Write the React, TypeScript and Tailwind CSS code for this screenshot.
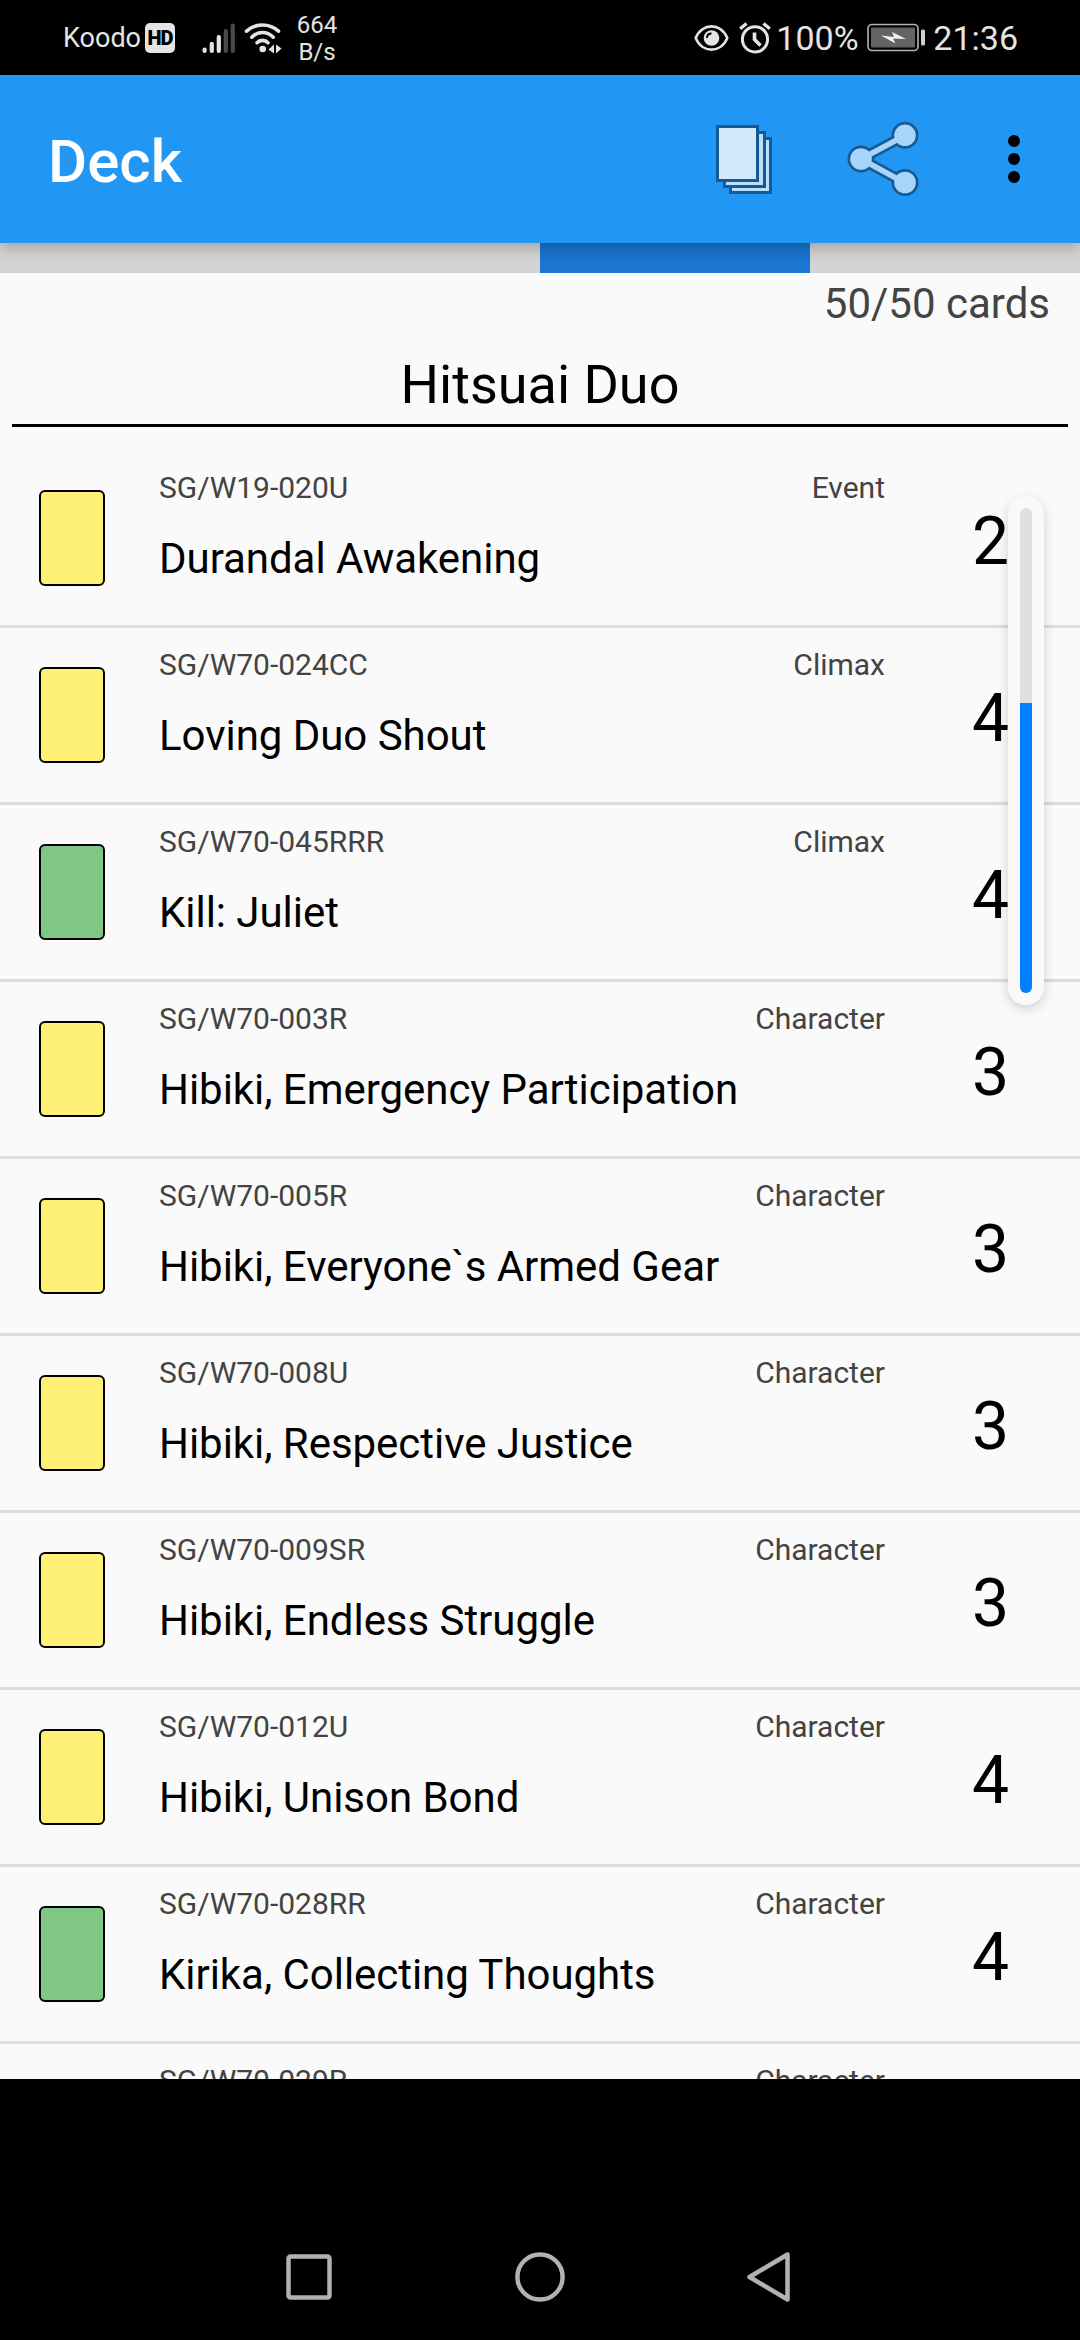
type Card = { code: string; type: string; name?: string; count?: number; color: "yellow" | "green" };

const cards: Card[] = [
  { code: "SG/W19-020U", type: "Event", name: "Durandal Awakening", count: 2, color: "yellow" },
  { code: "SG/W70-024CC", type: "Climax", name: "Loving Duo Shout", count: 4, color: "yellow" },
  { code: "SG/W70-045RRR", type: "Climax", name: "Kill: Juliet", count: 4, color: "green" },
  { code: "SG/W70-003R", type: "Character", name: "Hibiki, Emergency Participation", count: 3, color: "yellow" },
  { code: "SG/W70-005R", type: "Character", name: "Hibiki, Everyone`s Armed Gear", count: 3, color: "yellow" },
  { code: "SG/W70-008U", type: "Character", name: "Hibiki, Respective Justice", count: 3, color: "yellow" },
  { code: "SG/W70-009SR", type: "Character", name: "Hibiki, Endless Struggle", count: 3, color: "yellow" },
  { code: "SG/W70-012U", type: "Character", name: "Hibiki, Unison Bond", count: 4, color: "yellow" },
  { code: "SG/W70-028RR", type: "Character", name: "Kirika, Collecting Thoughts", count: 4, color: "green" },
  { code: "SG/W70-029R", type: "Character", color: "green" },
];

function StatusBar() {
  return (
    <div className="flex h-[75px] shrink-0 items-center justify-between bg-black pl-[63px] pr-[62px] text-[#e4e4e4]">
      <div className="flex items-center">
        <span className="w-[82px] text-[27px] leading-[32px]">Koodo</span>
        <span className="flex h-[30px] w-[30px] items-center justify-center rounded-[5px] bg-[#e4e4e4] text-[20px] leading-none font-black tracking-[-1px] text-black">
          HD
        </span>
        <svg className="ml-[27px]" width="34" height="32" viewBox="0 0 34 32" strokeWidth="4.2" strokeLinecap="round" fill="none">
          <g stroke="#e4e4e4">
            <path d="M2.6 27.6V29M9.8 21.8V29M16.8 15V29" />
          </g>
          <g stroke="#4a4a4a">
            <path d="M23.8 9V29M30.8 3.5V29" />
          </g>
        </svg>
        <svg className="ml-[8px]" width="38" height="32" viewBox="0 0 38 32" fill="none" stroke="#e4e4e4" strokeWidth="3.6" strokeLinecap="round">
          <path d="M2.5 9.2C11.5 1 25.5 1 34.5 9.2" />
          <path d="M7.8 15.2C14 9 23 9 29.2 15.2" />
          <path d="M13 20.7C16 17.6 21 17.6 24 20.7" />
          <circle cx="18.7" cy="27" r="3.3" fill="#e4e4e4" stroke="none" />
          <path d="M30 22.5V31.5L24.5 27.5ZM32 22.5L37.5 26.5L32 31.5Z" fill="#e4e4e4" stroke="none" />
        </svg>
        <span className="mt-[2px] ml-[13px] w-[44px] text-center text-[24px] leading-[27px]">
          664
          <br />
          B/s
        </span>
      </div>
      <div className="flex items-center">
        <svg width="35" height="28" viewBox="0 0 35 28" fill="none" stroke="#e4e4e4" strokeWidth="2.6">
          <path d="M1.7 14C8 -1.5 27 -1.5 33.3 14C27 29.5 8 29.5 1.7 14Z" strokeLinejoin="round" />
          <circle cx="17.5" cy="14" r="7.8" fill="#e4e4e4" stroke="none" />
          <path d="M13 14C13 11.2 14.8 9.5 17.5 9.5" stroke="#000" strokeWidth="1.8" />
        </svg>
        <svg className="ml-[10px]" width="32" height="32" viewBox="0 0 32 32" fill="none" stroke="#e4e4e4" strokeWidth="3">
          <circle cx="16" cy="17.3" r="12.6" />
          <path d="M1.2 6.7L7.5 1.5M30.8 6.7L24.5 1.5" strokeWidth="3.4" />
          <path d="M15.5 10.5V17.5L21.5 23.5" strokeWidth="3.6" />
        </svg>
        <span className="ml-[5px] w-[85px] text-[34px] leading-[40px]">100%</span>
        <svg className="ml-[6px]" width="59" height="29" viewBox="0 0 59 29">
          <rect x="1" y="1.5" width="50" height="26" rx="4" fill="#000" stroke="#b4b4b4" strokeWidth="1.6" />
          <rect x="4" y="4.5" width="44" height="20" rx="1" fill="#636363" />
          <path d="M14 12.5L27 14L25 9L39 16L26 15.5L28.5 20.5Z" fill="#f2f2f2" />
          <rect x="54" y="6.5" width="4" height="16" rx="1.5" fill="#cfcfcf" />
        </svg>
        <span className="ml-[7px] text-[34px] leading-[40px]">21:36</span>
      </div>
    </div>
  );
}

function AppBar() {
  return (
    <header className="relative z-10 flex h-[168px] shrink-0 items-center bg-[#2196f3] shadow-[0_6px_14px_rgba(0,0,0,0.22)]">
      <h1 className="ml-[48px] flex-1 pt-[5px] text-[60px] leading-[70px] font-medium text-white">Deck</h1>
      <svg className="mt-[2px]" width="58" height="70" viewBox="0 0 58 70" stroke="#155a92" strokeWidth="3" fill="#bbdefb">
        <path d="M15.5 13.5H55.5V67.5H15.5Z" />
        <path d="M9.5 7.5H49.5V61.5H9.5Z" />
        <path d="M2.5 1.5H42.5V55.5H2.5Z" fill="#d2e8fd" />
      </svg>
      <svg className="ml-[74px]" width="72" height="76" viewBox="0 0 72 76">
        <g stroke="#155a92" fill="#155a92">
          <path d="M58 14.5L14 38L58 62" fill="none" strokeWidth="11" />
          <circle cx="14" cy="38" r="13.5" stroke="none" />
          <circle cx="58" cy="14.3" r="13.5" stroke="none" />
          <circle cx="58" cy="61.5" r="13.5" stroke="none" />
        </g>
        <g stroke="#a6d4fa" fill="#a6d4fa">
          <path d="M58 14.5L14 38L58 62" fill="none" strokeWidth="5.5" />
          <circle cx="14" cy="38" r="10.8" stroke="none" />
          <circle cx="58" cy="14.3" r="10.8" stroke="none" />
          <circle cx="58" cy="61.5" r="10.8" stroke="none" />
        </g>
      </svg>
      <div className="mr-[60px] ml-[89px] flex flex-col gap-[6px]">
        <i className="size-3 rounded-full bg-black" />
        <i className="size-3 rounded-full bg-black" />
        <i className="size-3 rounded-full bg-black" />
      </div>
    </header>
  );
}

function CardRow({ card }: { card: Card }) {
  return (
    <li className="flex h-[177px] shrink-0 border-b-[3px] border-[#dcdcdc]">
      <div
        className={
          card.color === "yellow"
            ? "mt-[39px] ml-[39px] h-24 w-[66px] shrink-0 rounded-[6px] border-2 border-black bg-[#fff176]"
            : "mt-[39px] ml-[39px] h-24 w-[66px] shrink-0 rounded-[6px] border-2 border-black bg-[#81c784]"
        }
      />
      <div className="ml-[54px] w-[726px] pt-[17px]">
        <div className="flex justify-between text-[30px] leading-[40px] text-[#434343]">
          <span>{card.code}</span>
          <span>{card.type}</span>
        </div>
        <div className="mt-[26px] text-[42px] leading-[50px] tracking-[-0.04px] text-black">{card.name}</div>
      </div>
      <div className="ml-[87px] pt-[52px] text-[66px] leading-[78px] text-black">{card.count}</div>
    </li>
  );
}

function NavBar() {
  return (
    <nav className="flex grow items-end bg-black pb-[36px] pl-[284px]">
      <svg width="50" height="54" viewBox="0 0 50 54" fill="none" stroke="#b2b2b2" strokeWidth="4.5">
        <rect x="4.5" y="6.5" width="41" height="41" rx="2" />
      </svg>
      <svg className="ml-[179px]" width="54" height="54" viewBox="0 0 54 54" fill="none" stroke="#b2b2b2" strokeWidth="4.5">
        <circle cx="27" cy="27" r="22.6" />
      </svg>
      <svg className="ml-[178px]" width="48" height="54" viewBox="0 0 48 54" fill="none" stroke="#b2b2b2" strokeWidth="4.5" strokeLinejoin="round">
        <path d="M42.5 4.5V49.5L4.5 27Z" />
      </svg>
    </nav>
  );
}

export default function App() {
  return (
    <div className="flex h-[2340px] w-[1080px] flex-col overflow-hidden bg-black font-[Roboto,sans-serif]">
      <StatusBar />
      <AppBar />
      <main className="relative flex h-[1836px] shrink-0 flex-col overflow-hidden bg-[#fafafa]">
        <div className="flex h-[30px] shrink-0 bg-[#d4d4d4] pl-[540px]">
          <div className="w-[270px] bg-[#1976d2]" />
        </div>
        <div className="h-[60px] shrink-0 pr-[30px] pt-[6px] text-right text-[42px] leading-[50px] text-[#434343]">50/50 cards</div>
        <div className="mx-3 h-[94px] shrink-0 border-b-[3px] border-black pt-[20px] text-center text-[54px] leading-[64px] text-black">
          Hitsuai Duo
        </div>
        <ul className="mt-[24px] flex flex-col">
          {cards.map((card) => (
            <CardRow key={card.code} card={card} />
          ))}
        </ul>
        <div className="absolute top-[253px] right-[36px] flex h-[509px] w-[36px] rounded-full bg-[#f9f9f9] p-3 shadow-[0_4px_12px_rgba(0,0,0,0.17)]">
          <div className="flex w-3 flex-col overflow-hidden rounded-full bg-[#dfdfdf] pt-[195px]">
            <div className="grow bg-[#007fff]" />
          </div>
        </div>
      </main>
      <NavBar />
    </div>
  );
}
